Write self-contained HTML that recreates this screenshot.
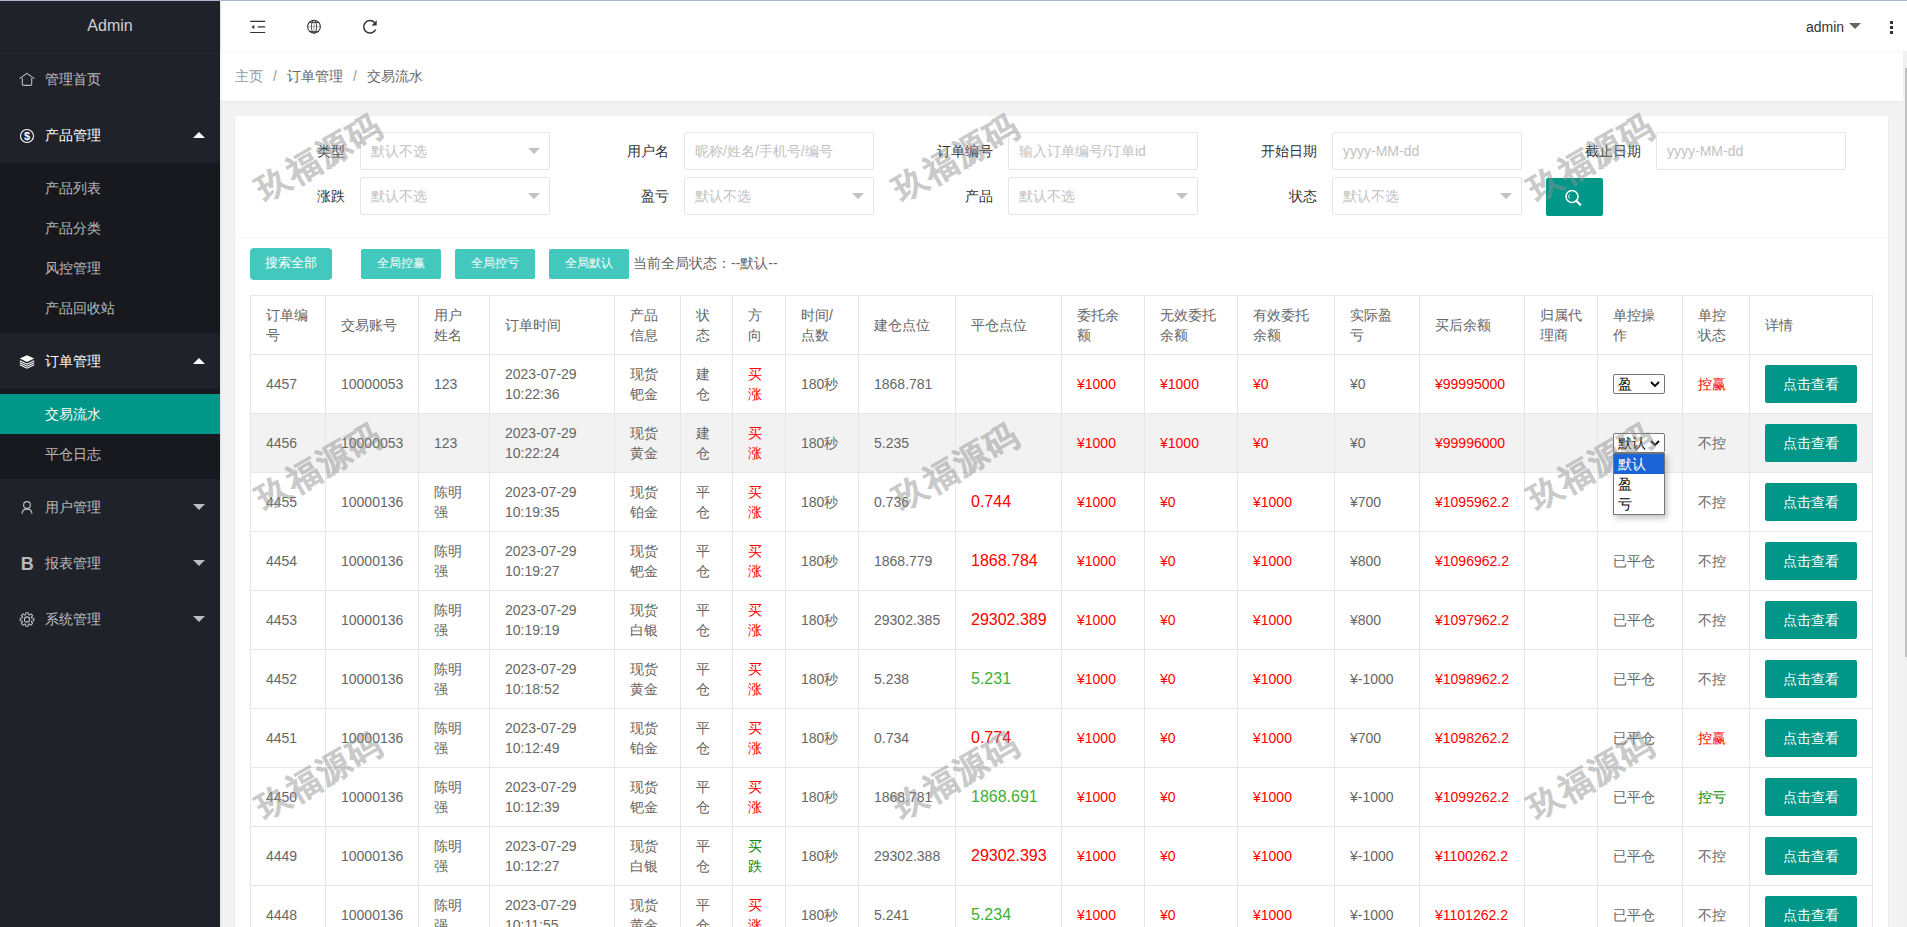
<!DOCTYPE html>
<html><head><meta charset="utf-8">
<style>
*{box-sizing:border-box;margin:0;padding:0}
html,body{width:1907px;height:927px;overflow:hidden}
body{position:relative;font-family:"Liberation Sans",sans-serif;font-size:14px;color:#666;background:#f2f2f2}
#topline{position:absolute;left:0;top:0;width:1907px;height:1px;background:#a9b7ce;z-index:50}
#side{position:absolute;left:0;top:0;width:220px;height:927px;background:#20222a;z-index:5;box-shadow:1px 0 2px 0 rgba(0,0,0,.08)}
#logo{position:absolute;left:0;top:0;width:220px;height:50px;line-height:51px;text-align:center;color:rgba(255,255,255,.8);font-size:16px;box-shadow:0 1px 2px 0 rgba(0,0,0,.15)}
.nav{position:absolute;left:0;width:220px}
.item{position:relative;height:56px;line-height:56px;padding-left:45px;color:rgba(255,255,255,.7);font-size:14px}
.item.on{color:#fff}
.item svg{position:absolute;left:19px;top:21px}
.tri{position:absolute;left:193px;width:0;height:0;border-left:6px solid transparent;border-right:6px solid transparent}
.tri.up{border-bottom:6px solid #fff;top:25px}
.tri.dn{border-top:6px solid rgba(255,255,255,.7);top:25px}
.child{background:#18191e;padding:5px 0}
.child div{height:40px;line-height:40px;padding-left:45px;color:rgba(255,255,255,.7)}
.child div.sel{background:#009688;color:#fff}
#header{position:absolute;left:220px;top:0;width:1687px;height:52px;background:#fff;border-bottom:1px solid #f6f6f6;z-index:4}
#header svg{position:absolute}
#admin{position:absolute;left:1586px;top:1px;line-height:52px;color:#333;font-size:14px}
#admin i{position:absolute;left:43px;top:22px;width:0;height:0;border-left:6px solid transparent;border-right:6px solid transparent;border-top:6px solid #666}
.dot{position:absolute;left:1670px;width:3px;height:3px;background:#333}
#main{position:absolute;left:220px;top:52px;width:1683px;height:875px;background:#f2f2f2;overflow:hidden}
#crumb{position:absolute;left:0;top:0;width:1683px;height:50px;background:#fff;border-bottom:1px solid #e8e8e8;line-height:48px;padding-left:15px;color:#999}
#crumb span.sep{margin:0 10px;color:#999}
#crumb cite{font-style:normal;color:#666}
#card{position:absolute;left:15px;top:64px;width:1653px;height:900px;background:#fff;border-radius:2px;box-shadow:0 1px 2px 0 rgba(0,0,0,.05)}
#filter{position:absolute;left:0;top:0;width:1653px;height:122px;border-bottom:1px solid #f6f6f6}
.lab{position:absolute;width:110px;height:38px;line-height:38px;text-align:right;padding-right:15px;color:#333;white-space:nowrap}
.inp{position:absolute;width:190px;height:38px;line-height:36px;border:1px solid #e6e6e6;border-radius:2px;padding-left:10px;color:#c2c2c2;background:#fff;white-space:nowrap}
.inp .arr{position:absolute;right:9px;top:15px;width:0;height:0;border-left:6px solid transparent;border-right:6px solid transparent;border-top:6px solid #c2c2c2}
#sbtn{position:absolute;left:1311px;top:62px;width:57px;height:38px;background:#009688;border-radius:2px}
#sbtn svg{position:absolute;left:18px;top:11px}
.btn{position:absolute;top:133px;height:30px;line-height:28px;background:#43c8be;color:#fff;font-size:12px;text-align:center;border-radius:2px;white-space:nowrap}
#allstate{position:absolute;left:398px;top:133px;line-height:28px;color:#666;white-space:nowrap}
#tbl{position:absolute;left:15px;top:179px;width:1622px;border-collapse:collapse;table-layout:fixed;background:#fff}
#tbl th,#tbl td{border:1px solid #e6e6e6;padding:9px 15px;line-height:20px;font-size:14px;font-weight:normal;text-align:left;color:#666;white-space:nowrap;overflow:visible}
#tbl tr.hov td{background:#f2f2f2}
#tbl .r{color:#f00}
#tbl .g{color:#3cb034}
#tbl .g2{color:#080}
#tbl .big{font-size:16px}
.vbtn{display:inline-block;position:relative;top:-1px;width:92px;height:38px;line-height:38px;background:#009688;color:#fff;text-align:center;border-radius:2px;vertical-align:middle;margin:-9px 0}
.osel{display:inline-block;position:relative;top:-1px;width:52px;height:20px;border:1px solid #767676;border-radius:2px;background:#fff;color:#000;line-height:18px;padding-left:4px;vertical-align:middle}
.osel .chev{position:absolute;right:4px;top:6px}
#scroll{position:absolute;left:1903px;top:51px;width:4px;height:876px;background:#f1f1f1;z-index:6}
#thumb{position:absolute;left:2px;top:17px;width:2px;height:589px;background:#c1c1c1}
.wm{position:absolute;width:0;height:0;z-index:20;pointer-events:none}
.wm span{position:absolute;left:0;top:0;transform-origin:0 0;transform:rotate(-30deg);font-size:33px;font-weight:bold;color:#919191;-webkit-text-stroke:.4px #919191;opacity:.48;white-space:nowrap;line-height:32px;letter-spacing:2px}
#popup{position:absolute;left:1613px;top:453px;width:52px;height:62px;background:#fff;border:1px solid #767676;z-index:30;box-shadow:2px 3px 6px rgba(0,0,0,.25)}
#popup div{height:20px;line-height:20px;padding-left:4px;color:#000}
#popup div.hl{background:#1a64d6;color:#fff}
</style></head>
<body>
<div id="topline"></div>
<div id="side">
  <div id="logo">Admin</div>
  <div class="nav" style="top:51px">
    <div class="item"><svg width="16" height="16" viewBox="0 0 16 16"><path d="M0.5 6.6L7.9 1.4 15.4 6.6M3.3 6V12Q3.3 13.4 4.7 13.4H11.3Q12.7 13.4 12.7 12V6" fill="none" stroke="rgba(255,255,255,.7)" stroke-width="1.1" stroke-linejoin="round"/></svg>管理首页</div>
    <div class="item on"><svg width="16" height="16" viewBox="0 0 16 16"><circle cx="8" cy="8" r="6.5" fill="none" stroke="#fff" stroke-width="1.1"/><text x="8" y="12" font-size="11" font-weight="bold" text-anchor="middle" fill="#fff" font-family="Liberation Sans">$</text></svg>产品管理<span class="tri up"></span></div>
    <div class="child"><div>产品列表</div><div>产品分类</div><div>风控管理</div><div>产品回收站</div></div>
    <div class="item on"><svg width="16" height="16" viewBox="0 0 16 16"><path d="M8 1.2L15.2 4.6 8 8 0.8 4.6z" fill="#fff"/><path d="M0.8 6.8L8 10.2 15.2 6.8M0.8 8.8L8 12.2 15.2 8.8M0.8 10.8L8 14.2 15.2 10.8" fill="none" stroke="#fff" stroke-width="1.1"/></svg>订单管理<span class="tri up"></span></div>
    <div class="child"><div class="sel">交易流水</div><div>平仓日志</div></div>
    <div class="item"><svg width="16" height="16" viewBox="0 0 16 16"><circle cx="8" cy="5" r="3.4" fill="none" stroke="rgba(255,255,255,.7)" stroke-width="1.15"/><path d="M3.1 13.8C3.1 10.8 5.1 9.1 8 9.1S12.9 10.8 12.9 13.8" fill="none" stroke="rgba(255,255,255,.7)" stroke-width="1.15"/></svg>用户管理<span class="tri dn"></span></div>
    <div class="item"><svg width="16" height="16" viewBox="0 0 16 16"><text x="1.7" y="13.9" font-size="18" font-weight="bold" fill="rgba(255,255,255,.7)" font-family="Liberation Sans">B</text></svg>报表管理<span class="tri dn"></span></div>
    <div class="item"><svg width="16" height="16" viewBox="0 0 16 16"><path d="M6.54 2.72 L6.80 0.70 L9.20 0.70 L9.46 2.72 L10.35 3.09 L11.96 1.85 L13.65 3.54 L12.41 5.15 L12.78 6.04 L14.80 6.30 L14.80 8.70 L12.78 8.96 L12.41 9.85 L13.65 11.46 L11.96 13.15 L10.35 11.91 L9.46 12.28 L9.20 14.30 L6.80 14.30 L6.54 12.28 L5.65 11.91 L4.04 13.15 L2.35 11.46 L3.59 9.85 L3.22 8.96 L1.20 8.70 L1.20 6.30 L3.22 6.04 L3.59 5.15 L2.35 3.54 L4.04 1.85 L5.65 3.09Z" fill="none" stroke="rgba(255,255,255,.7)" stroke-width="1.1" stroke-linejoin="round"/><circle cx="8" cy="7.5" r="2.6" fill="none" stroke="rgba(255,255,255,.7)" stroke-width="1.1"/></svg>系统管理<span class="tri dn"></span></div>
  </div>
</div>
<div id="header">
  <svg style="left:30px;top:20px" width="16" height="14" viewBox="0 0 16 14"><path d="M0.2 1.4h15M7.7 6.9h7.5M0.2 12.5h15" stroke="#333" stroke-width="1.2"/><path d="M1.3 6.9l3-2v4z" fill="#333"/></svg>
  <svg style="left:86px;top:19px" width="16" height="16" viewBox="0 0 16 16"><g fill="none" stroke="#333"><circle cx="8" cy="7.7" r="6.4" stroke-width="1.1"/><ellipse cx="8" cy="7.7" rx="2.6" ry="6.4" stroke-width="0.9"/><path d="M3 3.5h10M3 12.6h10" stroke-width="0.9"/><path d="M8 1.3v12.8M1.6 7.7h12.8" stroke-width="0.6" stroke="#777"/></g></svg>
  <svg style="left:142px;top:19px" width="16" height="16" viewBox="0 0 16 16"><path d="M12.4 3.4A6.25 6.25 0 1 0 13.66 10.44" fill="none" stroke="#333" stroke-width="1.5"/><path d="M14.7 1.2v5.4H9.5z" fill="#333"/></svg>
  <div id="admin">admin<i></i></div>
  <div class="dot" style="top:21px"></div><div class="dot" style="top:26px"></div><div class="dot" style="top:31px"></div>
</div>
<div id="main">
  <div id="crumb">主页<span class="sep">/</span><cite>订单管理</cite><span class="sep">/</span><cite>交易流水</cite></div>
  <div id="card">
    <div id="filter">
<div class="lab" style="left:15px;top:16px">类型</div><div class="inp" style="left:125px;top:16px">默认不选<i class="arr"></i></div>
<div class="lab" style="left:339px;top:16px">用户名</div><div class="inp" style="left:449px;top:16px">昵称/姓名/手机号/编号</div>
<div class="lab" style="left:663px;top:16px">订单编号</div><div class="inp" style="left:773px;top:16px">输入订单编号/订单id</div>
<div class="lab" style="left:987px;top:16px">开始日期</div><div class="inp" style="left:1097px;top:16px">yyyy-MM-dd</div>
<div class="lab" style="left:1311px;top:16px">截止日期</div><div class="inp" style="left:1421px;top:16px">yyyy-MM-dd</div>
<div class="lab" style="left:15px;top:61px">涨跌</div><div class="inp" style="left:125px;top:61px">默认不选<i class="arr"></i></div>
<div class="lab" style="left:339px;top:61px">盈亏</div><div class="inp" style="left:449px;top:61px">默认不选<i class="arr"></i></div>
<div class="lab" style="left:663px;top:61px">产品</div><div class="inp" style="left:773px;top:61px">默认不选<i class="arr"></i></div>
<div class="lab" style="left:987px;top:61px">状态</div><div class="inp" style="left:1097px;top:61px">默认不选<i class="arr"></i></div>
      <div id="sbtn"><svg width="20" height="18" viewBox="0 0 20 18"><circle cx="8" cy="7.5" r="6" fill="none" stroke="#fff" stroke-width="1.5"/><path d="M12.3 11.8l4 4" stroke="#fff" stroke-width="2.2" stroke-linecap="round"/><path d="M5.5 5.5a3 3 0 0 0 0 4" fill="none" stroke="#fff" stroke-width="1"/></svg></div>
    </div>
    <div class="btn" style="left:15px;top:132px;width:82px;height:32px;line-height:30px;font-size:13px;border-radius:4px">搜索全部</div>
    <div class="btn" style="left:126px;width:80px">全局控赢</div>
    <div class="btn" style="left:220px;width:80px">全局控亏</div>
    <div class="btn" style="left:314px;width:80px">全局默认</div>
    <div id="allstate">当前全局状态：--默认--</div>
<table id="tbl"><colgroup>
<col style="width:75px">
<col style="width:93px">
<col style="width:71px">
<col style="width:125px">
<col style="width:66px">
<col style="width:52px">
<col style="width:53px">
<col style="width:73px">
<col style="width:97px">
<col style="width:106px">
<col style="width:83px">
<col style="width:93px">
<col style="width:97px">
<col style="width:85px">
<col style="width:105px">
<col style="width:73px">
<col style="width:85px">
<col style="width:67px">
<col style="width:123px">
</colgroup><thead><tr>
<th>订单编<br>号</th>
<th>交易账号</th>
<th>用户<br>姓名</th>
<th>订单时间</th>
<th>产品<br>信息</th>
<th>状<br>态</th>
<th>方<br>向</th>
<th>时间/<br>点数</th>
<th>建仓点位</th>
<th>平仓点位</th>
<th>委托余<br>额</th>
<th>无效委托<br>余额</th>
<th>有效委托<br>余额</th>
<th>实际盈<br>亏</th>
<th>买后余额</th>
<th>归属代<br>理商</th>
<th>单控操<br>作</th>
<th>单控<br>状态</th>
<th>详情</th>
</tr></thead><tbody>
<tr>
<td>4457</td><td>10000053</td><td>123</td><td>2023-07-29<br>10:22:36</td><td>现货<br>钯金</td><td>建<br>仓</td><td><span class="r">买<br>涨</span></td><td>180秒</td><td>1868.781</td><td></td><td><span class="r">¥1000</span></td><td><span class="r">¥1000</span></td><td><span class="r">¥0</span></td><td>¥0</td><td><span class="r">¥99995000</span></td><td></td><td><span class="osel"><span class="st">盈</span><svg class="chev" width="10" height="6" viewBox="0 0 10 6"><path d="M1 1l4 4 4-4" fill="none" stroke="#000" stroke-width="1.8"/></svg></span></td><td><span class="r">控赢</span></td><td><span class="vbtn">点击查看</span></td>
</tr>
<tr class="hov">
<td>4456</td><td>10000053</td><td>123</td><td>2023-07-29<br>10:22:24</td><td>现货<br>黄金</td><td>建<br>仓</td><td><span class="r">买<br>涨</span></td><td>180秒</td><td>5.235</td><td></td><td><span class="r">¥1000</span></td><td><span class="r">¥1000</span></td><td><span class="r">¥0</span></td><td>¥0</td><td><span class="r">¥99996000</span></td><td></td><td><span class="osel"><span class="st">默认</span><svg class="chev" width="10" height="6" viewBox="0 0 10 6"><path d="M1 1l4 4 4-4" fill="none" stroke="#000" stroke-width="1.8"/></svg></span></td><td>不控</td><td><span class="vbtn">点击查看</span></td>
</tr>
<tr>
<td>4455</td><td>10000136</td><td>陈明<br>强</td><td>2023-07-29<br>10:19:35</td><td>现货<br>铂金</td><td>平<br>仓</td><td><span class="r">买<br>涨</span></td><td>180秒</td><td>0.736</td><td><span class="r big">0.744</span></td><td><span class="r">¥1000</span></td><td><span class="r">¥0</span></td><td><span class="r">¥1000</span></td><td>¥700</td><td><span class="r">¥1095962.2</span></td><td></td><td></td><td>不控</td><td><span class="vbtn">点击查看</span></td>
</tr>
<tr>
<td>4454</td><td>10000136</td><td>陈明<br>强</td><td>2023-07-29<br>10:19:27</td><td>现货<br>钯金</td><td>平<br>仓</td><td><span class="r">买<br>涨</span></td><td>180秒</td><td>1868.779</td><td><span class="r big">1868.784</span></td><td><span class="r">¥1000</span></td><td><span class="r">¥0</span></td><td><span class="r">¥1000</span></td><td>¥800</td><td><span class="r">¥1096962.2</span></td><td></td><td>已平仓</td><td>不控</td><td><span class="vbtn">点击查看</span></td>
</tr>
<tr>
<td>4453</td><td>10000136</td><td>陈明<br>强</td><td>2023-07-29<br>10:19:19</td><td>现货<br>白银</td><td>平<br>仓</td><td><span class="r">买<br>涨</span></td><td>180秒</td><td>29302.385</td><td><span class="r big">29302.389</span></td><td><span class="r">¥1000</span></td><td><span class="r">¥0</span></td><td><span class="r">¥1000</span></td><td>¥800</td><td><span class="r">¥1097962.2</span></td><td></td><td>已平仓</td><td>不控</td><td><span class="vbtn">点击查看</span></td>
</tr>
<tr>
<td>4452</td><td>10000136</td><td>陈明<br>强</td><td>2023-07-29<br>10:18:52</td><td>现货<br>黄金</td><td>平<br>仓</td><td><span class="r">买<br>涨</span></td><td>180秒</td><td>5.238</td><td><span class="g big">5.231</span></td><td><span class="r">¥1000</span></td><td><span class="r">¥0</span></td><td><span class="r">¥1000</span></td><td>¥-1000</td><td><span class="r">¥1098962.2</span></td><td></td><td>已平仓</td><td>不控</td><td><span class="vbtn">点击查看</span></td>
</tr>
<tr>
<td>4451</td><td>10000136</td><td>陈明<br>强</td><td>2023-07-29<br>10:12:49</td><td>现货<br>铂金</td><td>平<br>仓</td><td><span class="r">买<br>涨</span></td><td>180秒</td><td>0.734</td><td><span class="r big">0.774</span></td><td><span class="r">¥1000</span></td><td><span class="r">¥0</span></td><td><span class="r">¥1000</span></td><td>¥700</td><td><span class="r">¥1098262.2</span></td><td></td><td>已平仓</td><td><span class="r">控赢</span></td><td><span class="vbtn">点击查看</span></td>
</tr>
<tr>
<td>4450</td><td>10000136</td><td>陈明<br>强</td><td>2023-07-29<br>10:12:39</td><td>现货<br>钯金</td><td>平<br>仓</td><td><span class="r">买<br>涨</span></td><td>180秒</td><td>1868.781</td><td><span class="g big">1868.691</span></td><td><span class="r">¥1000</span></td><td><span class="r">¥0</span></td><td><span class="r">¥1000</span></td><td>¥-1000</td><td><span class="r">¥1099262.2</span></td><td></td><td>已平仓</td><td><span class="g2">控亏</span></td><td><span class="vbtn">点击查看</span></td>
</tr>
<tr>
<td>4449</td><td>10000136</td><td>陈明<br>强</td><td>2023-07-29<br>10:12:27</td><td>现货<br>白银</td><td>平<br>仓</td><td><span class="g2">买<br>跌</span></td><td>180秒</td><td>29302.388</td><td><span class="r big">29302.393</span></td><td><span class="r">¥1000</span></td><td><span class="r">¥0</span></td><td><span class="r">¥1000</span></td><td>¥-1000</td><td><span class="r">¥1100262.2</span></td><td></td><td>已平仓</td><td>不控</td><td><span class="vbtn">点击查看</span></td>
</tr>
<tr>
<td>4448</td><td>10000136</td><td>陈明<br>强</td><td>2023-07-29<br>10:11:55</td><td>现货<br>黄金</td><td>平<br>仓</td><td><span class="r">买<br>涨</span></td><td>180秒</td><td>5.241</td><td><span class="g big">5.234</span></td><td><span class="r">¥1000</span></td><td><span class="r">¥0</span></td><td><span class="r">¥1000</span></td><td>¥-1000</td><td><span class="r">¥1101262.2</span></td><td></td><td>已平仓</td><td>不控</td><td><span class="vbtn">点击查看</span></td>
</tr>
</tbody></table>
  </div>
</div>
<div id="scroll"><div id="thumb"></div></div>
<div class="wm" style="left:251px;top:179px"><span>玖福源码</span></div>
<div class="wm" style="left:888px;top:179px"><span>玖福源码</span></div>
<div class="wm" style="left:1523px;top:179px"><span>玖福源码</span></div>
<div class="wm" style="left:251px;top:488px"><span>玖福源码</span></div>
<div class="wm" style="left:888px;top:488px"><span>玖福源码</span></div>
<div class="wm" style="left:1523px;top:488px"><span>玖福源码</span></div>
<div class="wm" style="left:251px;top:797px"><span>玖福源码</span></div>
<div class="wm" style="left:888px;top:797px"><span>玖福源码</span></div>
<div class="wm" style="left:1523px;top:797px"><span>玖福源码</span></div>
<div id="popup"><div class="hl">默认</div><div>盈</div><div>亏</div></div>
</body></html>
